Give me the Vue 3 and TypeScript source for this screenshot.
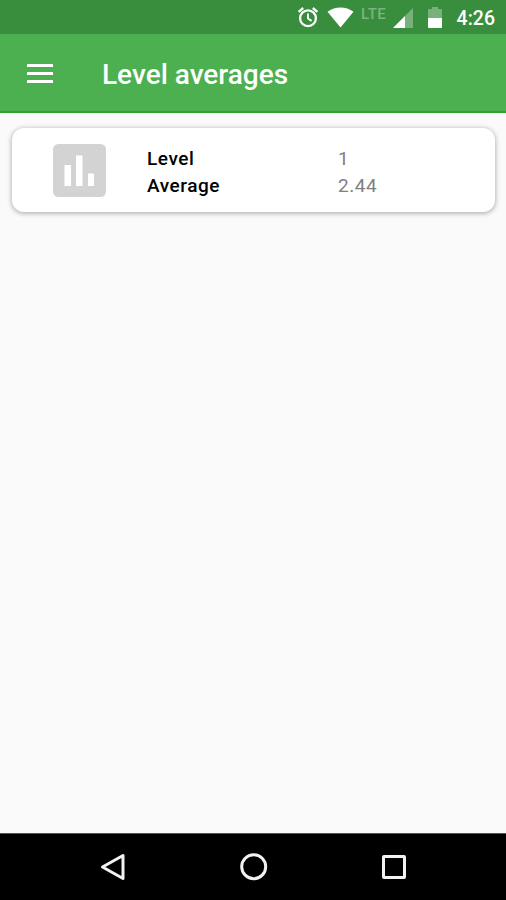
<script setup lang="ts">
interface Row {
  label: string
  value: string
}

const title = 'Level averages'
const time = '4:26'
const rows: Row[] = [
  { label: 'Level', value: '1' },
  { label: 'Average', value: '2.44' },
]
</script>

<template>
  <div class="screen">
    <div class="status">
      <svg class="alarm" width="22" height="22" viewBox="0 0 22 22" fill="none" stroke="#fff">
        <circle cx="11" cy="12.2" r="7.900" stroke-width="2.300" />
        <path d="M11 7.500v5l3.600 2.400" stroke-width="1.900" />
        <path d="M1.600 5.800L6.200 2M20.400 5.800L15.800 2" stroke-width="2.300" />
      </svg>
      <svg class="wifi" width="27" height="21" viewBox="0 0 27 21">
        <path d="M.5 4.700C8-1 19-1 26.500 4.700L13.500 20.500Z" fill="#fff" />
      </svg>
      <span class="lte">LTE</span>
      <svg class="signal" width="20" height="20" viewBox="0 0 20 20">
        <path d="M20 0V20H0Z" fill="#fff" opacity=".32" />
        <path d="M12 8V20H0Z" fill="#fff" />
      </svg>
      <svg class="battery" width="14" height="21" viewBox="0 0 14 21">
        <path d="M4 0H10V2H13Q14 2 14 3V11H0V3Q0 2 1 2H4Z" fill="#fff" opacity=".32" />
        <path d="M0 11H14V20Q14 21 13 21H1Q0 21 0 20Z" fill="#fff" />
      </svg>
      <span class="time">{{ time }}</span>
    </div>
    <header class="bar">
      <button class="menu" aria-label="Menu"><i></i><i></i><i></i></button>
      <h1>{{ title }}</h1>
    </header>
    <main>
      <section class="card">
        <svg class="chart" width="53" height="53" viewBox="0 0 53 53">
          <rect width="53" height="53" rx="5.500" fill="#d3d3d3" />
          <path d="M11.500 21H18V42H11.500ZM23 11.500H29.500V42H23ZM35 29.500H41V42H35Z" fill="#fff" />
        </svg>
        <dl>
          <div v-for="row in rows" :key="row.label" class="row">
            <dt>{{ row.label }}</dt>
            <dd>{{ row.value }}</dd>
          </div>
        </dl>
      </section>
    </main>
    <nav class="nav">
      <svg width="28" height="30" viewBox="0 0 28 30">
        <path d="M3.500 15L24 3.500V26.500Z" />
      </svg>
      <svg width="28" height="30" viewBox="0 0 28 30">
        <circle cx="13.700" cy="14.700" r="12" />
      </svg>
      <svg width="28" height="30" viewBox="0 0 28 30">
        <rect x="3.500" y="4.500" width="21" height="21" rx=".5" />
      </svg>
    </nav>
  </div>
</template>

<style>
body {
  margin: 0;
}
</style>

<style scoped>
.screen {
  width: 506px;
  height: 900px;
  display: flex;
  flex-direction: column;
  overflow: hidden;
  background: #fafafa;
  font-family: Roboto, "Liberation Sans", sans-serif;
}
.status {
  box-sizing: border-box;
  height: 34px;
  flex: none;
  display: flex;
  align-items: flex-start;
  padding: 7px 11px 0 297px;
  background: #388e3c;
  color: #fff;
}
.status svg {
  flex: none;
}
.alarm {
  margin-top: -1px;
}
.wifi {
  margin-left: 8px;
}
.lte {
  width: 32px;
  margin-left: 7px;
  font-size: 15px;
  line-height: 14px;
  font-weight: 500;
  letter-spacing: 0.4px;
  color: #7bb47e;
}
.signal {
  margin-top: 1px;
}
.battery {
  margin-left: 15px;
}
.time {
  margin-left: 15px;
  font-size: 19.5px;
  line-height: 24px;
  font-weight: 500;
}
.bar {
  box-sizing: border-box;
  height: 79px;
  flex: none;
  display: flex;
  align-items: center;
  padding-left: 27px;
  background: #4caf50;
  border-bottom: 2px solid #2da033;
}
.menu {
  width: 26px;
  display: flex;
  flex-direction: column;
  gap: 5px;
  margin-top: 2px;
  padding: 0;
  border: 0;
  background: none;
}
.menu i {
  height: 3px;
  background: #fff;
}
h1 {
  margin: 5px 0 0 49px;
  font-size: 28px;
  line-height: 32px;
  font-weight: 500;
  color: #fff;
}
main {
  flex: 1;
  padding: 15px 11px 0 12px;
}
.card {
  box-sizing: border-box;
  height: 84px;
  display: flex;
  align-items: center;
  padding-left: 41px;
  border-radius: 12px;
  background: #fff;
  box-shadow: 0 1px 4px 1px rgba(0, 0, 0, 0.26);
}
dl {
  margin: 3px 0 0 41px;
}
.row {
  display: flex;
  height: 27px;
  font-size: 19px;
  line-height: 27px;
  letter-spacing: 0.55px;
}
dt {
  width: 191px;
  font-weight: 500;
  color: #000;
}
dd {
  margin: 0;
  color: #808080;
}
.nav {
  box-sizing: border-box;
  height: 67px;
  flex: none;
  display: flex;
  align-items: center;
  justify-content: space-between;
  padding: 0 98px 0 99px;
  background: #000;
  border-top: 1px solid #555;
}
.nav svg {
  fill: none;
  stroke: #f2f2f2;
  stroke-width: 3;
  stroke-linejoin: round;
}
</style>
